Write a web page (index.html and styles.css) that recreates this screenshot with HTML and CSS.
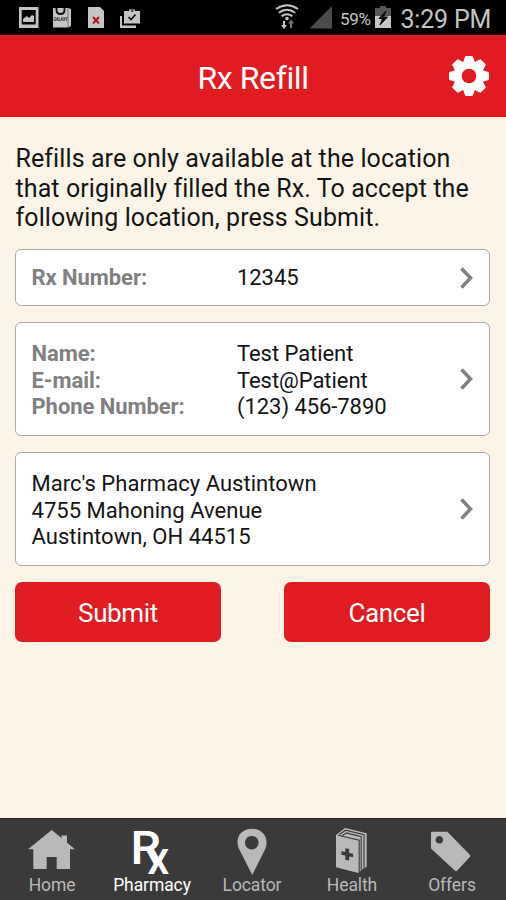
FILE: index.html
```html
<!DOCTYPE html>
<html lang="en">
<head>
<meta charset="utf-8">
<title>Rx Refill</title>
<link rel="stylesheet" href="styles.css">
</head>
<body>
<div class="status">
  <svg class="notices" viewBox="16 0 130 35">
    <g fill="#c4c4c4">
      <path fill-rule="evenodd" d="M19 7h19.500v21H19zM21.700 10v14.500h14V10z"/>
      <path d="M23 22v-3l4-3 2 2 3-3 2 1v6z"/>
      <path d="M53 8h15l3 1v17l-3 1.500H53z"/>
      <path d="M88 7h12l4 4v17H88z"/>
      <path d="M124 11h5V9.500h6V11h5v12.500h-16zM120 16h2v9.500h14V28h-16z"/>
    </g>
    <path d="M68 8.500v18.500" stroke="#777" fill="none"/>
    <path d="M56.500 7v3q0 4 4 4t4-4V7" fill="none" stroke="#111" stroke-width="1.900"/>
    <text class="galaxy" x="53.500" y="21" textLength="14" lengthAdjust="spacingAndGlyphs">GALAXY</text>
    <path d="M93 17l6 6.500m0-6.500l-6 6.500" stroke="#b01616" stroke-width="2"/>
    <path d="M128.500 17l2.500 2.500 4.500-5" fill="none" stroke="#111" stroke-width="1.700"/>
    <path d="M131 11h2.500" stroke="#111" stroke-width="1.200"/>
  </svg>
  <div class="right">
    <svg class="signals" viewBox="274 0 60 35">
      <g fill="none" stroke="#c4c4c4" stroke-width="2">
        <path d="M276 9q11-7.500 22 0M278.800 12.700q8.200-5.800 16.400 0M281.600 16.200q5.400-3.800 10.800 0"/>
      </g>
      <circle cx="287" cy="18.500" r="1.800" fill="#c4c4c4"/>
      <path d="M283 21h2v4h2l-3 4-3-4h2z" fill="#c4c4c4"/>
      <path d="M290 28h2v-4.500h2l-3-4-3 4h2z" fill="#777"/>
      <path d="M309.500 28.500H332V6z" fill="#4b4b4b"/>
    </svg>
    <span class="percent">59%</span>
    <svg class="battery" viewBox="375 0 16 35">
      <path d="M375 8h5V6h6v2h5v8h-16z" fill="#555"/>
      <path d="M375 16h16v12h-16z" fill="#c4c4c4"/>
      <path d="M386 11l-7 7.500h3.500L380 25l7.500-8h-4z" fill="#080808" stroke="#080808"/>
    </svg>
    <span class="clock">3:29 PM</span>
  </div>
</div>
<header class="header">
  <h1 class="title">Rx Refill</h1>
  <svg class="gear" viewBox="-21 -21 42 42">
    <g fill="#fff" stroke="#fff" stroke-linejoin="round">
      <circle r="14.800"/>
      <path id="tooth" d="M-5.500-13l2-6.500h7L5.500-13v26l-2 6.500h-7L-5.500 13z"/>
      <use href="#tooth" transform="rotate(45)"/>
      <use href="#tooth" transform="rotate(90)"/>
      <use href="#tooth" transform="rotate(135)"/>
    </g>
    <circle r="7.300" fill="#e01b22"/>
  </svg>
</header>
<main class="main">
  <p class="intro">Refills are only available at the location<br>that originally filled the Rx. To accept the<br>following location, press Submit.</p>
  <section class="card short">
    <dl class="fields"><dt>Rx Number:</dt><dd>12345</dd></dl>
    <svg class="chevron" viewBox="0 0 13 22"><path d="M1.500 1.500l9 9.500-9 9.500"/></svg>
  </section>
  <section class="card">
    <dl class="fields"><dt>Name:</dt><dd>Test Patient</dd><dt>E-mail:</dt><dd>Test@Patient</dd><dt>Phone Number:</dt><dd>(123) 456-7890</dd></dl>
    <svg class="chevron" viewBox="0 0 13 22"><path d="M1.500 1.500l9 9.500-9 9.500"/></svg>
  </section>
  <section class="card">
    <address class="address">Marc's Pharmacy Austintown<br>4755 Mahoning Avenue<br>Austintown, OH 44515</address>
    <svg class="chevron" viewBox="0 0 13 22"><path d="M1.500 1.500l9 9.500-9 9.500"/></svg>
  </section>
  <div class="actions"><button class="button">Submit</button><button class="button">Cancel</button></div>
</main>
<nav class="nav">
  <a class="tab"><svg class="icon" viewBox="22 826 60 50"><path d="M28 849.300L51.700 830l9.800 8v-2.500H67v7L75 849.300h-5V869H56.700v-12h-10v12H33.300v-19.700z"/></svg><span>Home</span></a>
  <a class="tab active"><svg class="icon" viewBox="122 826 60 50"><text class="rx" x="130.500" y="864" textLength="30.500" lengthAdjust="spacingAndGlyphs">R</text><text class="rx" x="147.300" y="874.300" textLength="22" lengthAdjust="spacingAndGlyphs">x</text></svg><span>Pharmacy</span></a>
  <a class="tab"><svg class="icon" viewBox="222 826 60 50"><path fill-rule="evenodd" d="M252.300 875l-13-25.500C234 838 241 828.700 251.700 828.700S270 838 265 849.500zM251.700 835.900a6.800 6.800 0 1 0 .1 0z"/></svg><span>Locator</span></a>
  <a class="tab"><svg class="icon" viewBox="322 826 60 50">
    <path d="M336 835l9-7 21.700 5.300v33.500l-5.200 3.200-3.200 3-22.300-5.700z"/>
    <path d="M339.500 834.500l6-4.300 18.500 4.600v34.500M342.500 835.500l4-2.600 14.700 3.800v33.500M338 835.300l21.200 5V873" fill="none" stroke="#3a3a3a" stroke-width="1.100"/>
    <path d="M345.300 848.300l3.800.8v3.800l4 .9v3.500l-4-.9v4.100l-3.800-.8v-4.100l-3.900-.8v-3.500l3.900.8z" fill="#3a3a3a"/>
  </svg><span>Health</span></a>
  <a class="tab"><svg class="icon" viewBox="422 826 60 50"><path fill-rule="evenodd" d="M432 831.800h15.400L470 855q.7.900 0 1.800l-13 14q-1 .9-2 0l-24-22.300v-15.700q0-1 1-1zM439.300 836a3.800 3.800 0 1 0 .1 0z"/></svg><span>Offers</span></a>
</nav>
</body>
</html>
```
FILE: styles.css
```css
* { box-sizing: border-box; }
body {
  margin: 0;
  width: 506px;
  height: 900px;
  display: flex;
  flex-direction: column;
  overflow: hidden;
  background: #fcf5e7;
  color: #141414;
  font-family: Roboto, "Liberation Sans", sans-serif;
}
svg { display: block; flex: none; }
.status {
  height: 35px;
  flex: none;
  display: flex;
  justify-content: space-between;
  padding: 0 15px 0 16px;
  background: #000;
  color: #c4c4c4;
}
.notices { width: 130px; height: 35px; }
.galaxy { font-size: 5px; font-weight: 700; fill: #222; }
.right { display: flex; align-items: center; white-space: nowrap; }
.signals { width: 60px; height: 35px; }
.percent { width: 41px; padding: 2px 0 0 6px; font-size: 17px; letter-spacing: -0.3px; }
.battery { width: 16px; height: 35px; }
.clock { width: 100px; padding: 4px 0 0 9.500px; font-size: 25px; line-height: 33px; letter-spacing: -0.2px; }
.header {
  height: 82px;
  flex: none;
  display: grid;
  grid-template-columns: 58px 1fr 58px;
  align-items: center;
  background: #e01b22;
  border-bottom: 1px solid #d9141b;
  color: #fff;
}
.title {
  grid-column: 2;
  margin: 5px 0 0;
  font-size: 32px;
  line-height: 40px;
  font-weight: 400;
  text-align: center;
  letter-spacing: -0.4px;
  font-variant-ligatures: none;
}
.gear { width: 42px; height: 42px; margin-top: 1px; }
.main { flex: 1; padding: 27px 16px 0 15px; }
.intro { margin: 0 0 16px 0.5px; font-size: 25px; line-height: 29.500px; letter-spacing: 0.09px; white-space: nowrap; }
.card {
  height: 114px;
  margin-bottom: 16px;
  padding: 0 16px 0 15.500px;
  display: flex;
  align-items: center;
  justify-content: space-between;
  background: #fff;
  border: 1.500px solid #a9a9ab;
  border-radius: 6px;
  font-size: 22px;
  line-height: 26.300px;
}
.short { height: 57px; }
.fields { display: grid; grid-template-columns: 205.500px auto; margin: 4.500px 0 0; white-space: nowrap; letter-spacing: -0.06px; }
.short .fields { margin-top: 3px; }
.fields dt { color: #808080; font-weight: 700; }
.fields dd { margin: 0; }
.address { font-style: normal; margin-top: 4.500px; letter-spacing: 0.03px; }
.chevron { width: 13px; height: 22px; margin-top: 1px; }
.chevron path { fill: none; stroke: #808080; stroke-width: 3.500; }
.actions { display: flex; justify-content: space-between; }
.button {
  width: 206px;
  height: 60px;
  padding: 2px 0 0;
  border: 0;
  border-radius: 7px;
  background: #e01b22;
  color: #fff;
  font: 400 26px/30px Roboto, "Liberation Sans", sans-serif;
  letter-spacing: -0.35px;
}
.nav {
  height: 82px;
  flex: none;
  display: grid;
  grid-template-columns: repeat(5, 100px);
  padding: 7px 2px 0;
  background: #3a3a3a;
  border-top: 1px solid #22222a;
}
.tab {
  display: flex;
  flex-direction: column;
  align-items: center;
  color: #b9b9b9;
  font-size: 17.500px;
  line-height: 18px;
  letter-spacing: -0.1px;
}
.active { color: #fff; }
.icon { width: 60px; height: 50px; fill: currentColor; }
.rx { font-size: 46.500px; font-weight: 500; }
```
